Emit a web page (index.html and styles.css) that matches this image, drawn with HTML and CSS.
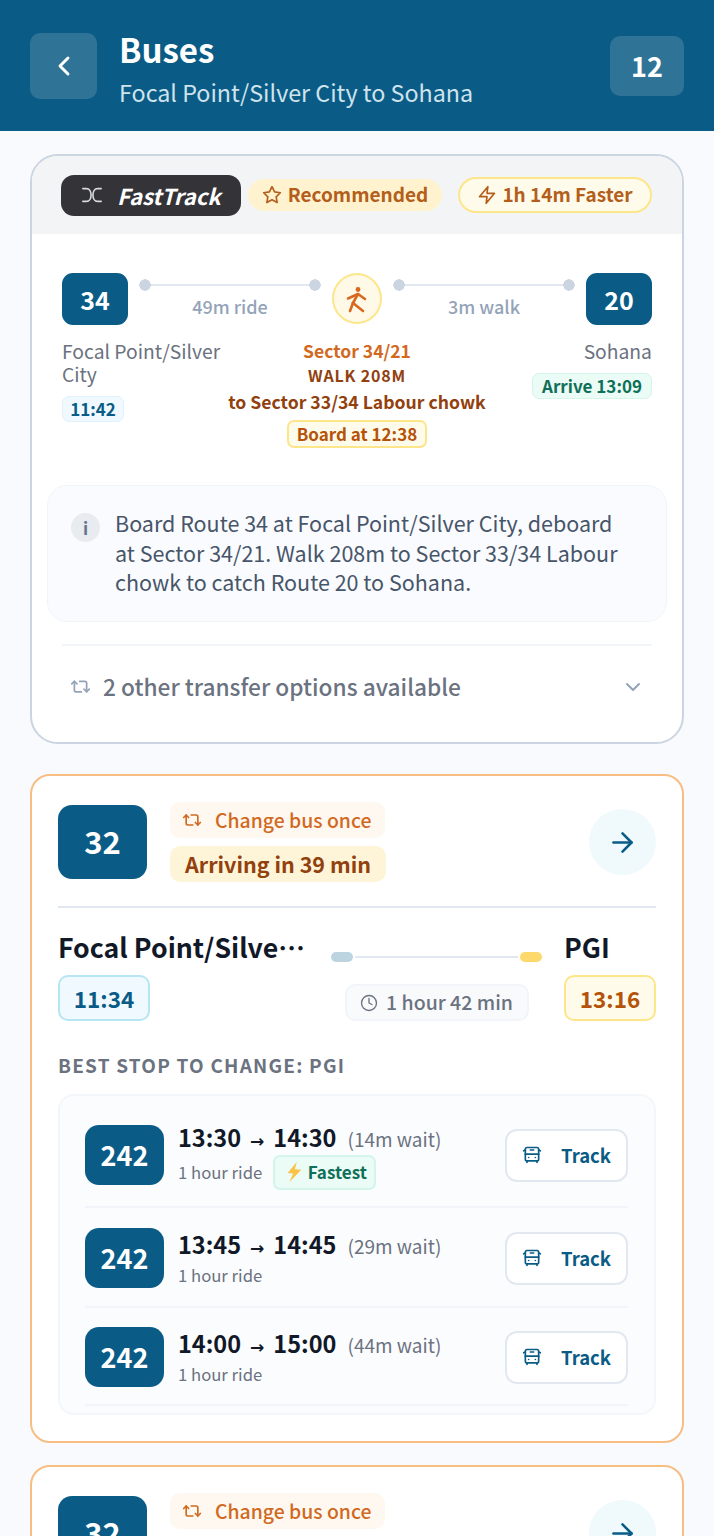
FILE: index.html
```html
<!DOCTYPE html>
<html lang="en">
<head>
<meta charset="utf-8">
<title>Buses</title>
<link rel="stylesheet" href="styles.css">
</head>
<body>
<svg class="defs" width="0" height="0" aria-hidden="true">
  <symbol id="i-repeat" viewBox="0 0 24 24"><path d="m2 9 3-3 3 3"/><path d="M13 18H7a2 2 0 0 1-2-2V6"/><path d="m22 15-3 3-3-3"/><path d="M11 6h6a2 2 0 0 1 2 2v10"/></symbol>
  <symbol id="i-arrow" viewBox="0 0 24 24"><path d="M5 12h14"/><path d="m12 5 7 7-7 7"/></symbol>
  <symbol id="i-bus" viewBox="0 0 24 24"><path d="M4 6 2 7"/><path d="M10 6h4"/><path d="m22 7-2-1"/><rect x="4" y="3" width="16" height="16" rx="2"/><path d="M4 11h16"/><path d="M8 15h.01"/><path d="M16 15h.01"/><path d="M6 19v2"/><path d="M18 19v2"/></symbol>
</svg>
<div class="screen">
  <header class="topbar">
    <button class="back"><svg class="ic ic-back" viewBox="0 0 24 24"><path d="m15 18-6-6 6-6"/></svg></button>
    <div class="titles">
      <div class="title">Buses</div>
      <div class="subtitle">Focal Point/Silver City to Sohana</div>
    </div>
    <div class="count">12</div>
  </header>

  <main class="list">
    <section class="card fast">
      <div class="fast-head">
        <span class="ft-pill"><svg class="ic ic-shuffle" viewBox="0 0 24 24"><path d="M2 5h4c3 0 5 3 5 7s-2 7-5 7H2"/><path d="M22 5h-4c-3 0-5 3-5 7s2 7 5 7h4"/></svg><b>FastTrack</b></span>
        <span class="rec-pill"><svg class="ic ic-small" viewBox="0 0 24 24"><polygon points="12 2 15.090 8.260 22 9.270 17 14.140 18.180 21.020 12 17.770 5.820 21.020 7 14.140 2 9.270 8.910 8.260 12 2"/></svg>Recommended</span>
        <span class="faster-pill"><svg class="ic ic-small" viewBox="0 0 24 24"><path d="M13 2 3 14h9l-1 8 10-12h-9l1-8z"/></svg>1h 14m Faster</span>
      </div>
      <div class="fast-body">
        <div class="track">
          <div class="route r-34">34</div>
          <div class="leg"><div class="leg-line"></div><div class="leg-label">49m ride</div></div>
          <div class="walk-dot"><svg class="ic ic-walk" viewBox="0 0 30 30"><circle class="head" cx="16" cy="5.500" r="2.400"/><path d="M6 14.500 16 10l7 5"/><path d="M16 10l-5 9"/><path d="M11 19l-3 8"/><path d="M11 19l10 8"/></svg></div>
          <div class="leg"><div class="leg-line"></div><div class="leg-label">3m walk</div></div>
          <div class="route r-34">20</div>
        </div>
        <div class="stops">
          <div class="stop-l">
            <div class="stop-name">Focal Point/Silver City</div>
            <span class="t-blue">11:42</span>
          </div>
          <div class="stop-c">
            <div class="c1">Sector 34/21</div>
            <div class="c2">WALK 208M</div>
            <div class="c3">to Sector 33/34 Labour chowk</div>
            <span class="t-amber">Board at 12:38</span>
          </div>
          <div class="stop-r">
            <div class="stop-name">Sohana</div>
            <span class="t-green">Arrive 13:09</span>
          </div>
        </div>
        <div class="info">
          <span class="info-i">i</span>
          <p>Board Route 34 at Focal Point/Silver City, deboard at Sector 34/21. Walk 208m to Sector 33/34 Labour chowk to catch Route 20 to Sohana.</p>
        </div>
        <div class="others">
          <svg class="ic ic-others"><use href="#i-repeat"/></svg>
          <span>2 other transfer options available</span>
          <svg class="ic ic-chev" viewBox="0 0 24 24"><path d="m6 9 6 6 6-6"/></svg>
        </div>
      </div>
    </section>

    <section class="card bus">
      <div class="bus-head">
        <div class="route r-32">32</div>
        <div class="tags">
          <span class="tag-change"><svg class="ic ic-change"><use href="#i-repeat"/></svg>Change bus once</span>
          <span class="tag-arrive">Arriving in 39 min</span>
        </div>
        <div class="go"><svg class="ic ic-go"><use href="#i-arrow"/></svg></div>
      </div>
      <div class="journey">
        <div class="from">
          <div class="place">Focal Point/Silver City</div>
          <span class="big-t blue">11:34</span>
        </div>
        <div class="mid">
          <div class="mid-line"><i class="cap-a"></i><i class="rule"></i><i class="cap-b"></i></div>
          <span class="dur"><svg class="ic ic-clock" viewBox="0 0 24 24"><circle cx="12" cy="12" r="10"/><polyline points="12 6 12 12 16 14"/></svg>1 hour 42 min</span>
        </div>
        <div class="to">
          <div class="place">PGI</div>
          <span class="big-t amber">13:16</span>
        </div>
      </div>
      <div class="best">BEST STOP TO CHANGE: PGI</div>
      <div class="panel">
        <div class="opt">
          <div class="route r-242">242</div>
          <div class="opt-text">
            <div class="times"><b>13:30<span class="arr">→</span>14:30</b><span class="wait">(14m wait)</span></div>
            <div class="sub">1 hour ride<span class="fastest"><svg class="bolt" viewBox="0 0 24 24"><polygon points="15 1 5 13 11 13.500 7 23 20 9.500 13 9 15 1"/></svg>Fastest</span></div>
          </div>
          <button class="track-btn"><svg class="ic ic-bus"><use href="#i-bus"/></svg>Track</button>
        </div>
        <div class="opt">
          <div class="route r-242">242</div>
          <div class="opt-text">
            <div class="times"><b>13:45<span class="arr">→</span>14:45</b><span class="wait">(29m wait)</span></div>
            <div class="sub">1 hour ride</div>
          </div>
          <button class="track-btn"><svg class="ic ic-bus"><use href="#i-bus"/></svg>Track</button>
        </div>
        <div class="opt">
          <div class="route r-242">242</div>
          <div class="opt-text">
            <div class="times"><b>14:00<span class="arr">→</span>15:00</b><span class="wait">(44m wait)</span></div>
            <div class="sub">1 hour ride</div>
          </div>
          <button class="track-btn"><svg class="ic ic-bus"><use href="#i-bus"/></svg>Track</button>
        </div>
      </div>
    </section>

    <section class="card bus">
      <div class="bus-head">
        <div class="route r-32">32</div>
        <div class="tags">
          <span class="tag-change"><svg class="ic ic-change"><use href="#i-repeat"/></svg>Change bus once</span>
          <span class="tag-arrive"></span>
        </div>
        <div class="go"><svg class="ic ic-go"><use href="#i-arrow"/></svg></div>
      </div>
    </section>
  </main>
</div>
</body>
</html>
```

FILE: styles.css
```css
* { box-sizing: border-box; }
html, body { margin: 0; padding: 0; }
body { font-family: "Noto Sans CJK SC", "Noto Sans", sans-serif; background: #f8fafd; color: #111827; }
.defs { position: absolute; }
.screen { height: 1536px; overflow: hidden; }
.ic { fill: none; stroke: currentColor; stroke-width: 2; stroke-linecap: round; stroke-linejoin: round; display: block; flex: none; }

.topbar { height: 131px; background: #0a5c86; display: flex; align-items: center; padding: 0 30px; color: #fff; }
.back { width: 67px; height: 66px; border: 0; border-radius: 10px; background: #2f7396; color: #fff; display: flex; align-items: center; justify-content: center; padding: 0; margin-top: 1px; }
.ic-back { width: 32px; height: 32px; stroke-width: 2.2; }
.titles { flex: 1; margin-left: 22px; }
.title { font-size: 33px; font-weight: 700; line-height: 40px; margin-top: 4px; }
.subtitle { font-size: 23.300px; line-height: 30px; color: #cfe3ed; margin-top: 8px; }
.count { width: 74px; height: 60px; border-radius: 10px; background: #2f7396; font-size: 27px; font-weight: 700; display: flex; align-items: center; justify-content: center; }

.list { padding: 23px 30px 0; display: flex; flex-direction: column; gap: 30px; }
.card { background: #fff; border: 2px solid #cbd5e1; }
.card.fast { border-radius: 28px; overflow: hidden; height: 590px; flex: none; }
.card.bus { border-color: #f7bd83; border-radius: 20px; padding: 26px; flex: none; }
.card.bus + .card.bus { margin-top: -8px; }

.fast-head { height: 78px; background: #f3f4f6; display: flex; align-items: center; padding: 0 0 0 29px; }
.ft-pill { width: 180px; height: 41px; border-radius: 13px; background: #333338; color: #fff; display: flex; align-items: center; padding: 0 0 1px 20px; }
.ft-pill b { font-size: 22px; font-style: italic; font-weight: 700; margin-left: 14px; }
.ic-shuffle { width: 22px; height: 22px; stroke: #d6d9de; stroke-width: 1.800; }
.ic-small { width: 20px; height: 20px; margin-top: 3px; }
.rec-pill { width: 194px; height: 32px; border-radius: 16px; margin-left: 7px; background: #fff3cf; color: #b45e1c; font-size: 19px; font-weight: 700; display: flex; align-items: center; justify-content: center; gap: 6px; padding-bottom: 3px; }
.faster-pill { width: 194px; height: 36px; border-radius: 18px; margin-left: 16px; background: #fffbeb; border: 2px solid #fde68a; color: #b45e1c; font-size: 19px; font-weight: 700; display: flex; align-items: center; justify-content: center; gap: 5px; padding-bottom: 3px; }

.fast-body { padding: 39px 30px 0; }
.track { display: flex; align-items: flex-start; }
.route { background: #0a5c86; color: #fff; font-weight: 700; display: flex; align-items: center; justify-content: center; flex: none; }
.r-34 { width: 66px; height: 52px; border-radius: 11px; font-size: 25px; padding-bottom: 1px; }
.leg { flex: 1; padding: 0 11px; }
.leg-line { height: 12px; position: relative; margin: 6px 0 0; }
.leg-line::before { content: ""; display: block; position: absolute; left: 6px; right: 6px; top: 5px; height: 2px; background: #e2e8f0; }
.leg-line::after { content: ""; display: block; height: 12px; border-radius: 6px; position: relative;
  background: radial-gradient(circle 6px at 6px 6px, #cbd5e1 5.500px, transparent 6px), radial-gradient(circle 6px at calc(100% - 6px) 6px, #cbd5e1 5.500px, transparent 6px); }
.leg-label { text-align: center; font-size: 18px; font-weight: 500; color: #94a3b8; line-height: 24px; margin-top: 3px; }
.walk-dot { width: 50px; height: 51px; border-radius: 50%; background: #fff9e8; border: 2px solid #fde68a; color: #d9691e; display: flex; align-items: center; justify-content: center; flex: none; }
.ic-walk { width: 30px; height: 30px; stroke-width: 2.600; }
.head { fill: currentColor; stroke: none; }

.stops { display: flex; justify-content: space-between; margin-top: 16px; height: 124px; }
.stop-l { width: 170px; }
.stop-r { width: 170px; text-align: right; }
.stop-name { font-size: 19.300px; line-height: 23px; color: #6b7280; margin-top: -1px; }
.stop-c { flex: 1; display: flex; flex-direction: column; align-items: center; text-align: center; }
.c1 { font-size: 17.500px; line-height: 22px; font-weight: 700; color: #d1691f; margin-top: -1px; }
.c2 { font-size: 16px; line-height: 24px; font-weight: 700; color: #92400e; letter-spacing: .8px; margin-top: 1px; }
.c3 { font-size: 17.600px; line-height: 24px; font-weight: 700; color: #92400e; margin-top: 3px; white-space: nowrap; }
.t-blue, .t-green, .t-amber { display: inline-block; font-weight: 700; font-size: 17px; border-radius: 7px; line-height: 22px; }
.t-blue { margin-top: 10px; width: 62px; padding: 1px 0; text-align: center; background: #f0f9ff; border: 1px solid #e0f2fe; color: #0a5c86; }
.t-green { margin-top: 10px; padding: 1px 9px; background: #ebfbf6; border: 1px solid #d3f5ea; color: #0f6f58; }
.t-amber { margin-top: 6px; padding: 1px 8px; background: #fffbeb; border: 2px solid #fde68a; color: #b45309; }

.info { margin: 20px -15px 0 -15px; height: 137px; border: 1px solid #f1f5f9; background: #fafbfe; border-radius: 20px; padding: 22px 23px 0; display: flex; align-items: flex-start; gap: 15px; }
.info-i { width: 29px; height: 29px; margin-top: 5px; border-radius: 50%; background: #e8ebef; color: #64748b; font-size: 17px; font-weight: 700; display: flex; align-items: center; justify-content: center; flex: none; }
.info p { margin: 0; max-width: 510px; font-size: 21.500px; line-height: 29.500px; color: #475569; }
.others { border-top: 2px solid #f1f5f9; margin-top: 22px; height: 82px; display: flex; align-items: center; color: #6b7280; font-size: 22.700px; font-weight: 500; padding: 0 8px; }
.ic-others { width: 21px; height: 21px; color: #94a3b8; margin-right: 12px; }
.others span { flex: 1; }
.ic-chev { width: 24px; height: 24px; color: #94a3b8; margin: 2px -1px 0 0; }

.bus-head { display: flex; align-items: center; padding-bottom: 24px; border-bottom: 2px solid #e2e8f0; }
.r-32 { width: 89px; height: 74px; border-radius: 14px; font-size: 31px; padding-bottom: 3px; }
.tags { flex: 1; margin-left: 23px; display: flex; flex-direction: column; align-items: flex-start; gap: 8px; }
.tag-change { height: 36px; width: 215px; border-radius: 10px; background: #fef8f0; color: #d1691f; font-size: 19.400px; font-weight: 500; display: flex; align-items: center; padding: 0 0 2px 12px; gap: 13px; }
.ic-change { width: 20px; height: 20px; margin-top: 1px; }
.tag-arrive { height: 36px; width: 216px; border-radius: 10px; background: #fef5d8; color: #92400e; font-size: 21.500px; font-weight: 700; display: flex; align-items: center; justify-content: center; padding-bottom: 1px; }
.go { width: 67px; height: 66px; border-radius: 50%; background: #f0f9fc; color: #0a5c86; display: flex; align-items: center; justify-content: center; }
.ic-go { width: 31px; height: 31px; }

.journey { display: flex; margin-top: 21px; }
.from { width: 250px; }
.place { font-size: 26.700px; line-height: 40px; font-weight: 700; color: #111827; white-space: nowrap; overflow: hidden; text-overflow: ellipsis; margin-top: -2px; }
.big-t { display: inline-flex; align-items: center; justify-content: center; width: 92px; height: 46px; margin-top: 8px; border-radius: 10px; border: 2px solid; font-size: 22.500px; font-weight: 700; padding-bottom: 1px; }
.blue { background: #f0f9ff; border-color: #b6e6f2; color: #0a5c86; }
.amber { background: #fffbeb; border-color: #fde68a; color: #b45309; }
.mid { width: 233px; margin-left: 23px; display: flex; flex-direction: column; align-items: center; }
.mid-line { width: 211px; height: 10px; margin-top: 23px; display: flex; align-items: center; gap: 2px; }
.cap-a, .cap-b { width: 22px; height: 10px; border-radius: 5px; }
.cap-a { background: #bcd4e0; }
.cap-b { background: #fcd96a; }
.rule { flex: 1; height: 2px; background: #e2e8f0; }
.dur { margin-top: 22px; width: 184px; height: 37px; border-radius: 10px; border: 2px solid #f1f5f9; background: #f8fafc; color: #6b7280; font-size: 19.500px; font-weight: 500; display: flex; align-items: center; justify-content: center; gap: 8px; padding-bottom: 2px; }
.ic-clock { width: 18px; height: 18px; stroke-width: 1.800; margin-top: 2px; }
.to { margin-left: 22px; width: 92px; }

.best { margin-top: 32px; font-size: 19px; line-height: 24px; font-weight: 700; letter-spacing: 1.200px; color: #6b7280; }
.panel { margin-top: 17px; height: 321px; background: #fbfcfe; border: 2px solid #f3f6fa; border-radius: 16px; padding: 8px 26px 0 25px; }
.opt { display: flex; align-items: center; height: 100px; border-bottom: 2px solid #f1f5f9; }
.opt + .opt { padding-top: 2px; }
.opt:first-child { height: 104px; }
.opt:last-child { height: 98px; }
.r-242 { width: 79px; height: 60px; border-radius: 14px; font-size: 27px; padding-bottom: 1px; }
.opt-text { flex: 1; margin-left: 14px; }
.times { display: flex; align-items: baseline; gap: 11px; line-height: 28px; }
.times b { font-size: 23.500px; font-weight: 700; color: #111827; }
.arr { font-family: "DejaVu Sans", sans-serif; font-size: 17px; margin: 0 9px; }
.wait { font-size: 19px; color: #6b7280; }
.sub { display: flex; align-items: center; font-size: 16.700px; line-height: 22px; color: #6b7280; margin-top: 2px; }
.fastest { height: 35px; width: 103px; border-radius: 7px; background: #ebfbf6; border: 2px solid #d3f5ea; color: #0f6f58; font-size: 17px; font-weight: 700; margin: -2px 0 -2px 11px; display: flex; align-items: center; justify-content: center; gap: 3px; }
.bolt { width: 22px; height: 22px; fill: #fbc24a; display: block; flex: none; }
.track-btn { width: 123px; height: 53px; border-radius: 12px; border: 2px solid #e2e8f0; background: #fff; color: #0a5c86; font-family: inherit; font-size: 18.500px; font-weight: 700; display: flex; align-items: center; justify-content: center; gap: 19px; padding: 0; }
.ic-bus { width: 20px; height: 20px; }
```
